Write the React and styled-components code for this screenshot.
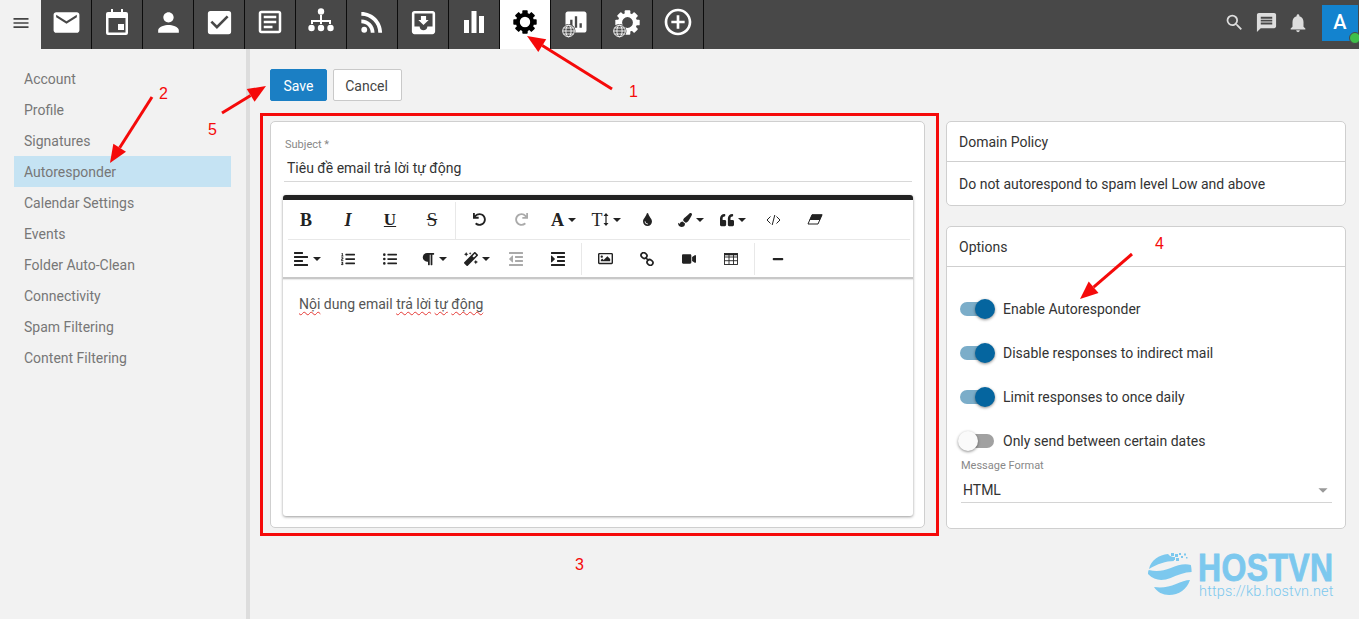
import React from "react";
import styled, { createGlobalStyle } from "styled-components";
import {
  MdMenu, MdEmail, MdPerson, MdCheckBox, MdRssFeed, MdMoveToInbox, MdAssessment,
  MdAddCircleOutline, MdSearch, MdMessage, MdNotifications, MdOutlineArticle, MdArrowDropDown,
} from "react-icons/md";
import {
  FaUndo, FaRedo, FaTint, FaPaintBrush, FaQuoteLeft, FaAlignLeft,
  FaListOl, FaListUl, FaParagraph, FaMagic, FaOutdent, FaIndent, FaRegImage, FaVideo,
  FaMinus,
} from "react-icons/fa";

const Global = createGlobalStyle`
  html, body { margin: 0; height: 100%; overflow: hidden; background: #f2f2f2; }
  body { font-family: Roboto, "Liberation Sans", sans-serif; font-size: 14px; color: #333; }
  * { box-sizing: border-box; }
`;

const Page = styled.div`position: relative; display: flex; flex-direction: column; height: 100vh;`;
const TopBar = styled.header`display: flex; height: 49px; flex: none; background: #484848;`;
const MenuCell = styled.div`
  width: 41px; display: flex; align-items: center; justify-content: center;
  background: #f2f2f2; color: #444; font-size: 20px; padding-bottom: 4px;
`;
const Tab = styled.div`
  width: 51px; display: flex; align-items: center; justify-content: center;
  border-right: 1px solid #0c0c0c; font-size: ${p => p.$size || 30}px;
  background: ${p => (p.$active ? "#fff" : "transparent")};
  color: ${p => (p.$active ? "#000" : "#fff")};
  position: relative; padding-bottom: 5px;
`;
const TopRight = styled.div`
  margin-left: auto; display: flex; align-items: center; color: #ddd; padding-right: 1px; padding-bottom: 4px;
`;
const TopIcon = styled.span`display: flex; width: 32px; justify-content: center; font-size: ${p => p.$size}px;`;
const Avatar = styled.div`
  position: relative; width: 36px; height: 36px; margin-left: 8px;
  background: #1383cf; color: #fff; font-size: 20px; font-weight: 500; padding-bottom: 2px;
  display: flex; align-items: center; justify-content: center;
`;
const Presence = styled.span`
  position: absolute; right: -3px; bottom: -3px; width: 12px; height: 12px; border-radius: 50%;
  background: #3fbf4a; border: 1px solid #484848;
`;
const Badge = styled.span`
  position: absolute; left: 10px; top: 24px; width: 15px; height: 14px; display: block; line-height: 0;
`;

const Body = styled.div`flex: 1; display: flex; min-height: 0;`;
const Sidebar = styled.nav`
  width: 250px; flex: none; padding: 14px 15px 0 14px; border-right: 4px solid #ddd;
`;
const NavItem = styled.div`
  height: 31px; line-height: 33px; padding-left: 10px; color: #777;
  background: ${p => (p.$active ? "#c5e3f3" : "transparent")};
`;
const Main = styled.main`flex: 1; padding: 20px 0 0 20px;`;
const Actions = styled.div`display: flex; gap: 6px; margin-bottom: 20px;`;
const Button = styled.button`
  height: 32px; width: ${p => p.$w}px; padding: 2px ${p => (p.$primary ? 0 : 2)}px 0 0; font: 14px Roboto, sans-serif;
  border-radius: 2px; border: 1px solid ${p => (p.$primary ? "#1b7fc4" : "#c9c9c9")};
  background: ${p => (p.$primary ? "#1b7fc4" : "#fff")};
  color: ${p => (p.$primary ? "#fff" : "#444")};
`;
const Columns = styled.div`display: grid; grid-template-columns: 655px 400px; gap: 21px; align-items: start;`;
const Card = styled.section`
  background: #fff; border: 1px solid #cfcfcf; border-radius: 5px;
`;
const ComposeCard = styled(Card)`height: 407px; padding: 16px 11px 11px 11px;`;
const SideStack = styled.div`display: flex; flex-direction: column; gap: 20px;`;
const CardHead = styled.div`
  height: 40px; line-height: 40px; padding-left: 12px; border-bottom: 1px solid #cfcfcf; color: #333;
`;
const PolicyText = styled.div`height: 43px; line-height: 44px; padding-left: 12px; color: #333;`;
const OptionsBody = styled.div`height: 261px; padding: 20px 14px 0 14px;`;
const FieldLabel = styled.div`font-size: 11px; color: #888; line-height: 13px; padding-left: ${p => p.$pad || 0}px; margin-top: ${p => p.$top || 0}px;`;
const SubjectValue = styled.div`
  height: 27px; line-height: 26px; padding-left: 3px; margin: 4px 1px 0 2px; border-bottom: 1px solid #d8d8d8; color: #333;
`;
const Editor = styled.div`
  height: 321px; margin: 13px 0 0 1px; border-top: 5px solid #222; border-radius: 3px;
  background: #fff; box-shadow: 0 1px 3px rgba(0,0,0,.4); width: 630px; display: flex; flex-direction: column;
`;
const Toolbar = styled.div`height: 79px; flex: none; border-bottom: 2px solid #c8c8c8; box-shadow: 0 1px 1px rgba(0,0,0,.08);`;
const ToolRow = styled.div`
  display: flex; height: ${p => p.$h}px; padding-left: 2px; align-items: stretch;
`;
const RowRule = styled.div`height: 1px; background: #e8e8e8; margin: 0 3px 0 5px;`;
const Tool = styled.div`
  width: ${p => p.$w || 42}px; display: flex; align-items: center; justify-content: center; flex: none;
  padding-left: ${p => p.$shift || 0}px;
  color: ${p => (p.$muted ? "#aaa" : "#222")}; font-size: ${p => p.$size || 14}px;
`;
const Glyph = styled.span`
  font-family: "Liberation Serif", serif; font-size: ${p => p.$size || 18}px; line-height: 1; color: #222;
  font-weight: ${p => (p.$bold ? 700 : 400)};
  font-style: ${p => (p.$italic ? "italic" : "normal")};
  text-decoration: ${p => p.$line || "none"};
`;
const Caret = styled.span`
  width: 0; height: 0; margin-left: 4px; border: 4px solid transparent; border-top-color: #222; border-bottom: 0;
`;
const ToolSep = styled.div`width: 1px; background: #e8e8e8; margin: ${p => (p.$top ? "2px 2px 0 2px" : "3px 2px 2px 2px")}; flex: none;`;
const Content = styled.div`padding: 15px 16px; color: #555; line-height: 20px;`;
const Typo = styled.span`text-decoration: underline wavy #e53935 1px; text-underline-offset: 2px; text-decoration-skip-ink: none;`;

const OptionRow = styled.div`height: 44px; display: flex; align-items: center; gap: 9px; color: #333;`;
const Track = styled.span`
  position: relative; width: 34px; height: 14px; border-radius: 7px; flex: none; margin-left: -1px;
  background: ${p => (p.$on ? "#7badc9" : "#a1a1a1")};
`;
const Thumb = styled.span`
  position: absolute; top: -3px; ${p => (p.$on ? "right: -1px" : "left: -2px")};
  width: 20px; height: 20px; border-radius: 50%;
  background: ${p => (p.$on ? "#05659f" : "#fafafa")}; box-shadow: 0 1px 3px rgba(0,0,0,.45);
`;
const SelectField = styled.div`
  height: 26px; display: flex; align-items: center; justify-content: space-between; margin-top: 5px; width: 371px;
  padding: 0 0 0 2px; border-bottom: 1px solid #d4d4d4; color: #333;
`;
const SelectArrow = styled.span`display: flex; color: #999; font-size: 22px; margin-right: -2px;`;

const Logo = styled.div`position: absolute; left: 1148px; top: 552px; display: flex; gap: 6px; color: #7cc8ee;`;
const LogoWords = styled.div`display: flex; flex-direction: column;`;
const LogoName = styled.div`
  font: 700 38px/32px "Liberation Sans", sans-serif; letter-spacing: .5px; -webkit-text-stroke: .9px #7cc8ee; height: 31px;
  transform: scaleX(.84); transform-origin: left center; white-space: nowrap; width: 136px;
`;
const LogoUrl = styled.div`font: 300 14.5px/18px Roboto, sans-serif; letter-spacing: .17px; white-space: nowrap; padding-left: 1px;`;

const Overlay = styled.svg`position: absolute; left: 0; top: 0; width: 1359px; height: 619px; pointer-events: none;`;
const Mark = styled.span`
  position: absolute; color: #f50a0a; font: 16px/18px "Liberation Sans", sans-serif;
  left: ${p => p.$x}px; top: ${p => p.$y}px;
`;
const Frame = styled.div`
  position: absolute; left: 260px; top: 113px; width: 679px; height: 423px; border: 3px solid #f50a0a; pointer-events: none;
`;

const Globe = () => (
  <svg width="15" height="14" viewBox="0 0 15 14">
    <circle cx="7.500" cy="7" r="7" fill="#484848" />
    <g fill="none" stroke="#fff" strokeWidth=".9">
      <circle cx="7.500" cy="7" r="5.800" />
      <ellipse cx="7.500" cy="7" rx="2.600" ry="5.800" />
      <path d="M1.700 7h11.600M2.500 4h10M2.500 10h10" />
    </g>
  </svg>
);

const Calendar = () => (
  <svg width="24" height="26" viewBox="0 0 24 26" fill="#fff">
    <path d="M6 0h2v3h8V0h2v3h3a2 2 0 0 1 2 2v19a2 2 0 0 1-2 2H3a2 2 0 0 1-2-2V5a2 2 0 0 1 2-2h3zM3.500 9v14.500h17V9z" fillRule="evenodd" />
    <rect x="13" y="15" width="6" height="6" />
  </svg>
);
const Cog = ({ size = 24 }) => (
  <svg width={size} height={size} viewBox="0 0 24 24" fill="currentColor">
    {[0, 45, 90, 135, 180, 225, 270, 315].map(r => (
      <rect key={r} x="9.300" y="0.300" width="5.400" height="6" rx=".8" transform={`rotate(${r} 12 12)`} />
    ))}
    <circle cx="12" cy="12" r="7.200" fill="none" stroke="currentColor" strokeWidth="4" />
  </svg>
);
const Sitemap = () => (
  <svg width="30" height="30" viewBox="0 0 30 30" fill="#fff">
    <circle cx="15" cy="4.500" r="3.200" />
    <path d="M14 8h2v5h9v4h-2v-2h-7v2h-2v-2H7v2H5v-4h9z" />
    <circle cx="5.500" cy="21" r="3.200" /><circle cx="15" cy="21" r="3.200" /><circle cx="24.500" cy="21" r="3.200" />
  </svg>
);
const Bars = () => (
  <svg width="22" height="22" viewBox="0 0 22 22" fill="#fff">
    <rect x="1" y="9" width="5" height="13" /><rect x="8.500" y="0" width="5" height="22" /><rect x="16" y="5" width="5" height="17" />
  </svg>
);
const CodeIcon = () => (
  <svg width="15" height="12" viewBox="0 0 15 12" fill="none" stroke="#222" strokeWidth="1">
    <path d="M4.500 2.500 1 6l3.500 3.500M10.500 2.500 14 6l-3.500 3.500M8.800 1 6.200 11" />
  </svg>
);
const EraserIcon = () => (
  <svg width="16" height="11" viewBox="0 0 16 11">
    <path d="M5 .8h10L11 10H1z" fill="#fff" stroke="#222" strokeWidth="1" />
    <path d="M5 .5h10.500L12.800 6H2.500z" fill="#222" />
  </svg>
);
const SizeArrow = () => (
  <svg width="6" height="13" viewBox="0 0 6 13" fill="#222">
    <path d="M3 0 5.500 3H3.600v7h1.900L3 13 .5 10h1.900V3H.5z" />
  </svg>
);
const LinkIcon = () => (
  <svg width="14" height="14" viewBox="0 0 14 14" fill="none" stroke="#222" strokeWidth="1.700">
    <rect x="1" y="1" width="6" height="5" rx="2.400" transform="rotate(40 4 3.500)" />
    <rect x="7" y="8" width="6" height="5" rx="2.400" transform="rotate(40 10 10.500)" />
    <path d="M5.500 5.500l3 3" />
  </svg>
);
const TableIcon = () => (
  <svg width="14" height="12" viewBox="0 0 14 12" fill="none" stroke="#222" strokeWidth=".9">
    <rect x=".5" y=".5" width="13" height="11" />
    <path d="M.5 4h13M.5 7.700h13M5 .5v11M9.500 .5v11" />
    <path d="M.5 1.500h13" strokeWidth="1.600" />
  </svg>
);

const LogoMark = () => (
  <svg width="44" height="45" viewBox="0 0 44 45" fill="#7cc8ee">
    <path d="M20 2c-9 1-17 6-19 15 8-5 17-8 25-8l-1-4-3-1z" />
    <path d="M23 1h3v3h-3zM27 2h3v3h-3zM31 1h2v2h-2zM24 5h3v3h-3zM28 6h3v3h-3zM33 4h2v2h-2zM36 1.500h2v2h-2zM38 5h1.500v1.500H38z" />
    <path d="M0 22c0-2 .2-3 .8-4 8 2 14 1 22-2 7-3 14-5 20-3 .5 2 .8 4 .8 7-7 0-14 3-21 6-8 3-16 3-22.600-4z" />
    <path d="M6 35c8 1 15 0 22-3 5-2 10-4 14-4-3 9-11 15-21 15-6 0-12-3-15-8z" />
  </svg>
);

const tabs = [
  [<MdEmail />, 31], [<Calendar />], [<MdPerson />, 31], [<MdCheckBox />, 31], [<MdOutlineArticle />, 30],
  [<Sitemap />], [<MdRssFeed />, 32], [<MdMoveToInbox />, 31], [<Bars />],
];
const nav = ["Account", "Profile", "Signatures", "Autoresponder", "Calendar Settings", "Events", "Folder Auto-Clean", "Connectivity", "Spam Filtering", "Content Filtering"];
const options = [
  ["Enable Autoresponder", true], ["Disable responses to indirect mail", true],
  ["Limit responses to once daily", true], ["Only send between certain dates", false],
];

const Arrow = ({ x1, y1, x2, y2 }) => {
  const a = Math.atan2(y2 - y1, x2 - x1);
  const L = 18, W = 7.5;
  const bx = x2 - L * Math.cos(a), by = y2 - L * Math.sin(a);
  const nx = -Math.sin(a) * W, ny = Math.cos(a) * W;
  return (
    <g>
      <line x1={x1} y1={y1} x2={bx} y2={by} stroke="#f50a0a" strokeWidth="3" />
      <polygon points={`${x2},${y2} ${bx + nx},${by + ny} ${bx - nx},${by - ny}`} fill="#f50a0a" />
    </g>
  );
};

export default function App() {
  return (
    <Page>
      <Global />
      <TopBar>
        <MenuCell><MdMenu /></MenuCell>
        {tabs.map(([icon, size], i) => <Tab key={i} $size={size}>{icon}</Tab>)}
        <Tab $active><Cog /></Tab>
        <Tab $size={28}><MdAssessment /><Badge><Globe /></Badge></Tab>
        <Tab><Cog size={25} /><Badge><Globe /></Badge></Tab>
        <Tab $size={32}><MdAddCircleOutline /></Tab>
        <TopRight>
          <TopIcon $size={21}><MdSearch /></TopIcon>
          <TopIcon $size={23}><MdMessage /></TopIcon>
          <TopIcon $size={22}><MdNotifications /></TopIcon>
          <Avatar>A<Presence /></Avatar>
        </TopRight>
      </TopBar>
      <Body>
        <Sidebar>
          {nav.map(n => <NavItem key={n} $active={n === "Autoresponder"}>{n}</NavItem>)}
        </Sidebar>
        <Main>
          <Actions>
            <Button $primary $w={57}>Save</Button>
            <Button $w={69}>Cancel</Button>
          </Actions>
          <Columns>
            <ComposeCard>
              <FieldLabel $pad={3}>Subject *</FieldLabel>
              <SubjectValue>Tiêu đề email trả lời tự động</SubjectValue>
              <Editor>
                <Toolbar>
                  <ToolRow $h={39}>
                    <Tool><Glyph $bold>B</Glyph></Tool>
                    <Tool><Glyph $italic $bold>I</Glyph></Tool>
                    <Tool><Glyph $bold $size={17} $line="underline">U</Glyph></Tool>
                    <Tool><Glyph $size={19} $line="line-through">S</Glyph></Tool>
                    <ToolSep $top />
                    <Tool $size={13}><FaUndo /></Tool>
                    <Tool $size={13} $muted><FaRedo /></Tool>
                    <Tool $w={43}><Glyph $bold>A</Glyph><Caret /></Tool>
                    <Tool><Glyph $size={18}>T</Glyph><SizeArrow /><Caret /></Tool>
                    <Tool $w={41} $size={13}><FaTint /></Tool>
                    <Tool $w={46}><FaPaintBrush /><Caret /></Tool>
                    <Tool $w={38}><FaQuoteLeft /><Caret /></Tool>
                    <Tool><CodeIcon /></Tool>
                    <Tool><EraserIcon /></Tool>
                  </ToolRow>
                  <RowRule />
                  <ToolRow $h={37}>
                    <Tool $size={16} $shift={2}><FaAlignLeft /><Caret /></Tool>
                    <Tool><FaListOl /></Tool>
                    <Tool><FaListUl /></Tool>
                    <Tool $shift={4}><FaParagraph /><Caret /></Tool>
                    <Tool $shift={5}><FaMagic /><Caret /></Tool>
                    <Tool $muted $size={16}><FaOutdent /></Tool>
                    <Tool $size={16}><FaIndent /></Tool>
                    <ToolSep />
                    <Tool $size={15}><FaRegImage /></Tool>
                    <Tool><LinkIcon /></Tool>
                    <Tool><FaVideo /></Tool>
                    <Tool><TableIcon /></Tool>
                    <ToolSep />
                    <Tool $size={12}><FaMinus /></Tool>
                  </ToolRow>
                </Toolbar>
                <Content>
                  <Typo>Nội</Typo> dung email <Typo>trả lời</Typo> <Typo>tự</Typo> <Typo>động</Typo>
                </Content>
              </Editor>
            </ComposeCard>
            <SideStack>
              <Card>
                <CardHead>Domain Policy</CardHead>
                <PolicyText>Do not autorespond to spam level Low and above</PolicyText>
              </Card>
              <Card>
                <CardHead>Options</CardHead>
                <OptionsBody>
                  {options.map(([label, on]) => (
                    <OptionRow key={label}>
                      <Track $on={on}><Thumb $on={on} /></Track>
                      {label}
                    </OptionRow>
                  ))}
                  <FieldLabel $top={-4}>Message Format</FieldLabel>
                  <SelectField>HTML<SelectArrow><MdArrowDropDown /></SelectArrow></SelectField>
                </OptionsBody>
              </Card>
            </SideStack>
          </Columns>
        </Main>
      </Body>
      <Logo>
        <LogoMark />
        <LogoWords>
          <LogoName>HOSTVN</LogoName>
          <LogoUrl>https://kb.hostvn.net</LogoUrl>
        </LogoWords>
      </Logo>
      <Frame />
      <Overlay viewBox="0 0 1359 619">
        <Arrow x1={612} y1={89} x2={527} y2={36} />
        <Arrow x1={152} y1={97} x2={110} y2={163} />
        <Arrow x1={222} y1={113} x2={266} y2={86} />
        <Arrow x1={1132} y1={254} x2={1080} y2={299} />
      </Overlay>
      <Mark $x={629} $y={83}>1</Mark>
      <Mark $x={159} $y={85}>2</Mark>
      <Mark $x={575} $y={556}>3</Mark>
      <Mark $x={1155} $y={235}>4</Mark>
      <Mark $x={208} $y={121}>5</Mark>
    </Page>
  );
}
